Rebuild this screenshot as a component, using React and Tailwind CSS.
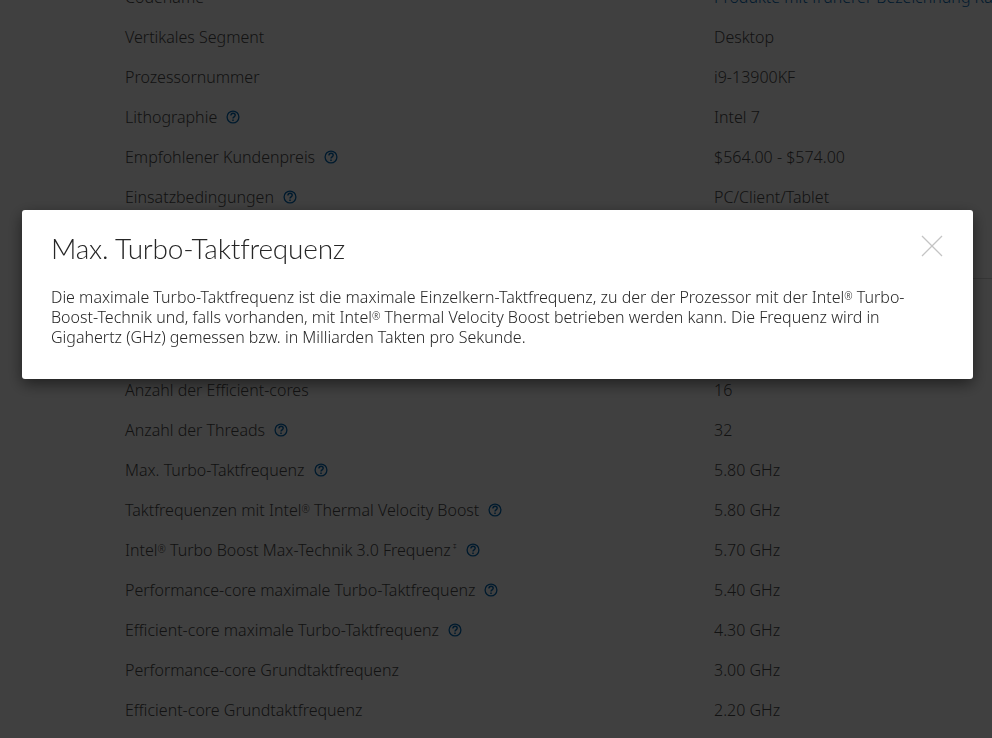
import React from 'react';

const FONT = "font-['Noto_Sans',sans-serif]";

const firstRows = [
  { label: 'Vertikales Segment', value: 'Desktop' },
  { label: 'Prozessornummer', value: 'i9-13900KF' },
  { label: 'Lithographie', value: 'Intel 7', help: true },
  { label: 'Empfohlener Kundenpreis', value: '$564.00 - $574.00', help: true },
  { label: 'Einsatzbedingungen', value: 'PC/Client/Tablet', help: true },
];

const secondRows = [
  { label: 'Anzahl der Kerne', value: '24', help: true },
  { label: 'Anzahl der Performance-cores', value: '8' },
  { label: 'Anzahl der Efficient-cores', value: '16' },
  { label: 'Anzahl der Threads', value: '32', help: true },
  { label: 'Max. Turbo-Taktfrequenz', value: '5.80 GHz', help: true },
  { label: <>Taktfrequenzen mit Intel<Reg /> Thermal Velocity Boost</>, value: '5.80 GHz', help: true },
  { label: <>Intel<Reg /> Turbo Boost Max-Technik 3.0 Frequenz<sup className="text-[8px] ml-[2px] -top-[7px]">‡</sup></>, value: '5.70 GHz', help: true },
  { label: 'Performance-core maximale Turbo-Taktfrequenz', value: '5.40 GHz', help: true },
  { label: 'Efficient-core maximale Turbo-Taktfrequenz', value: '4.30 GHz', help: true },
  { label: 'Performance-core Grundtaktfrequenz', value: '3.00 GHz' },
  { label: 'Efficient-core Grundtaktfrequenz', value: '2.20 GHz' },
];

function Reg() {
  return <span className="text-[10px] leading-none align-[3px]">®</span>;
}

function HelpIcon() {
  return (
    <svg viewBox="0 0 14 14" className="w-[14px] h-[14px] ml-[9px] shrink-0" fill="none" stroke="#0068b5">
      <circle cx="7" cy="7" r="5.9" strokeWidth="1.3" />
      <path d="M4.9 5.5C4.9 4.1 5.9 3.3 7 3.3C8.2 3.3 9.2 4.1 9.2 5.3C9.2 6.9 7 6.9 7 8.6" strokeWidth="1.4" />
      <path d="M7 9.5V11" strokeWidth="1.5" />
    </svg>
  );
}

function Row({ label, value, help, link }) {
  return (
    <div className="flex h-10 items-center whitespace-nowrap">
      <div className="w-[589px] flex items-center shrink-0">
        <span>{label}</span>
        {help && <HelpIcon />}
      </div>
      <div className={link ? 'text-[#0068b5]' : ''}>{value}</div>
    </div>
  );
}

export default function App() {
  return (
    <div className={`h-[738px] w-[992px] overflow-hidden bg-white text-[#4a4a4a] text-base font-light ${FONT}`}>
      {/* spec table, scrolled past the top of the page */}
      <div className="-mt-[23px] pl-[125px] pb-[21px]">
        <Row label="Codename" value="Produkte mit früherer Bezeichnung Raptor Lake" link />
        {firstRows.map((r, i) => <Row key={i} {...r} />)}
        <Row label="Sockets" value="FCLGA1700" />
      </div>
      <div className="ml-[125px] border-t border-[#d7d7d7]">
        <div className="pt-[11px]">
          {secondRows.map((r, i) => <Row key={i} {...r} />)}
        </div>
      </div>

      {/* backdrop + dialog */}
      <div className="fixed inset-0 bg-black/75">
        <div className="absolute left-[22px] top-[210px] w-[951px] h-[169px] bg-white rounded-[3px] shadow-[0_5px_15px_rgba(0,0,0,0.5)] px-[29px] text-[#262626]">
          <div className="pt-[20px] h-[77px]">
            <h2 className="text-[28px] leading-[36px] font-light tracking-[-0.2px] font-['Lato',sans-serif]">Max. Turbo-Taktfrequenz</h2>
          </div>
          <p className="leading-5">
            Die maximale Turbo-Taktfrequenz ist die maximale Einzelkern-Taktfrequenz, zu der der Prozessor mit der Intel<Reg /> Turbo-Boost-Technik und, falls vorhanden, mit Intel<Reg /> Thermal Velocity Boost betrieben werden kann. Die Frequenz wird in Gigahertz (GHz) gemessen bzw. in Milliarden Takten pro Sekunde.
          </p>
          <button className="absolute right-[30px] top-[25px] w-[22px] h-[22px]" aria-label="Schließen">
            <svg viewBox="0 0 22 22" className="w-[22px] h-[22px]" fill="none" stroke="#c4c4c4" strokeWidth="1.3">
              <path d="M1 1L21 21M21 1L1 21" />
            </svg>
          </button>
        </div>
      </div>
    </div>
  );
}
